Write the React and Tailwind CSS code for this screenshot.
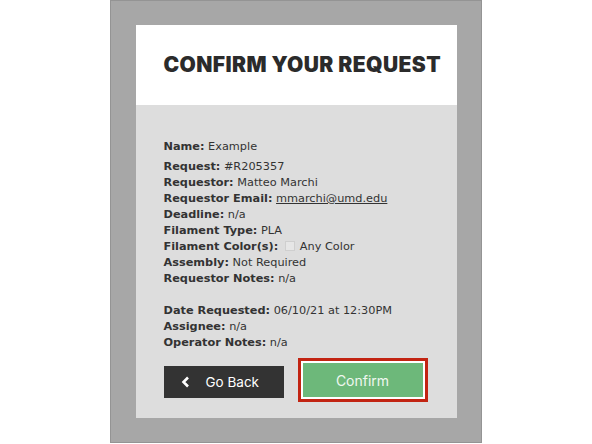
import React from "react";

const rows1 = [
  ["Request:", "#R205357"],
  ["Requestor:", "Matteo Marchi"],
  ["Requestor Email:", "mmarchi@umd.edu", true],
  ["Deadline:", "n/a"],
  ["Filament Type:", "PLA"],
  ["Filament Color(s):", "color"],
  ["Assembly:", "Not Required"],
  ["Requestor Notes:", "n/a"],
];

const rows2 = [
  ["Date Requested:", "06/10/21 at 12:30PM"],
  ["Assignee:", "n/a"],
  ["Operator Notes:", "n/a"],
];

const Row = ({ label, value, link }) => (
  <div className="h-[16px] leading-[16px] whitespace-nowrap">
    <span className="font-bold">{label}</span>{" "}
    {value === "color" ? (
      <span>
        <span className="inline-block align-[-1px] w-[10px] h-[10px] bg-[#e6e6e6] border border-[#cfcfcf] ml-[3px] mr-[5px]" />
        Any Color
      </span>
    ) : link ? (
      <span className="underline">{value}</span>
    ) : (
      value
    )}
  </div>
);

export default function App() {
  return (
    <div className="w-[592px] h-[444px] bg-white flex justify-center">
      <div className="w-[372px] h-[443px] ml-[-1px] bg-[#a7a7a7] border border-[#949494] pt-[24px] pl-[25px]">
        <div className="w-[321px] h-[393px] bg-[#dddddd] flex flex-col">
          <div className="h-[80px] bg-white flex items-center pl-[28px]">
            <h1
              className="text-[21px] font-black text-[#2b2b2b] tracking-[0.4px]"
              style={{ fontFamily: "Inter, sans-serif" }}
            >
              CONFIRM YOUR REQUEST
            </h1>
          </div>
          <div
            className="pl-[28px] pt-[34px] text-[11.3px] text-[#333]"
            style={{ fontFamily: '"DejaVu Sans", Verdana, sans-serif' }}
          >
            <div className="h-[16px] leading-[16px] mb-[4px]">
              <span className="font-bold">Name:</span> Example
            </div>
            {rows1.map(([l, v, link]) => (
              <Row key={l} label={l} value={v} link={link} />
            ))}
            <div className="h-[16px]" />
            {rows2.map(([l, v]) => (
              <Row key={l} label={l} value={v} />
            ))}
            <div
              className="flex items-start mt-[7px] gap-[14px]"
              style={{ fontFamily: "Inter, sans-serif" }}
            >
              <div className="w-[120px] h-[32px] bg-[#333333] text-white flex items-center text-[13.5px] mt-[8px]">
                <svg width="10" height="12" viewBox="0 0 10 12" className="ml-[17px] mr-[15px]">
                  <path d="M7 1.5 L2.5 6 L7 10.5" stroke="white" strokeWidth="2.6" fill="none" />
                </svg>
                Go Back
              </div>
              <div className="border-[3px] border-[#c22412] bg-white p-[2px]">
                <div className="w-[120px] h-[34px] bg-[#6db87a] text-[#f0f7f0] flex items-center justify-center text-[14px]">
                  Confirm
                </div>
              </div>
            </div>
          </div>
        </div>
      </div>
    </div>
  );
}
